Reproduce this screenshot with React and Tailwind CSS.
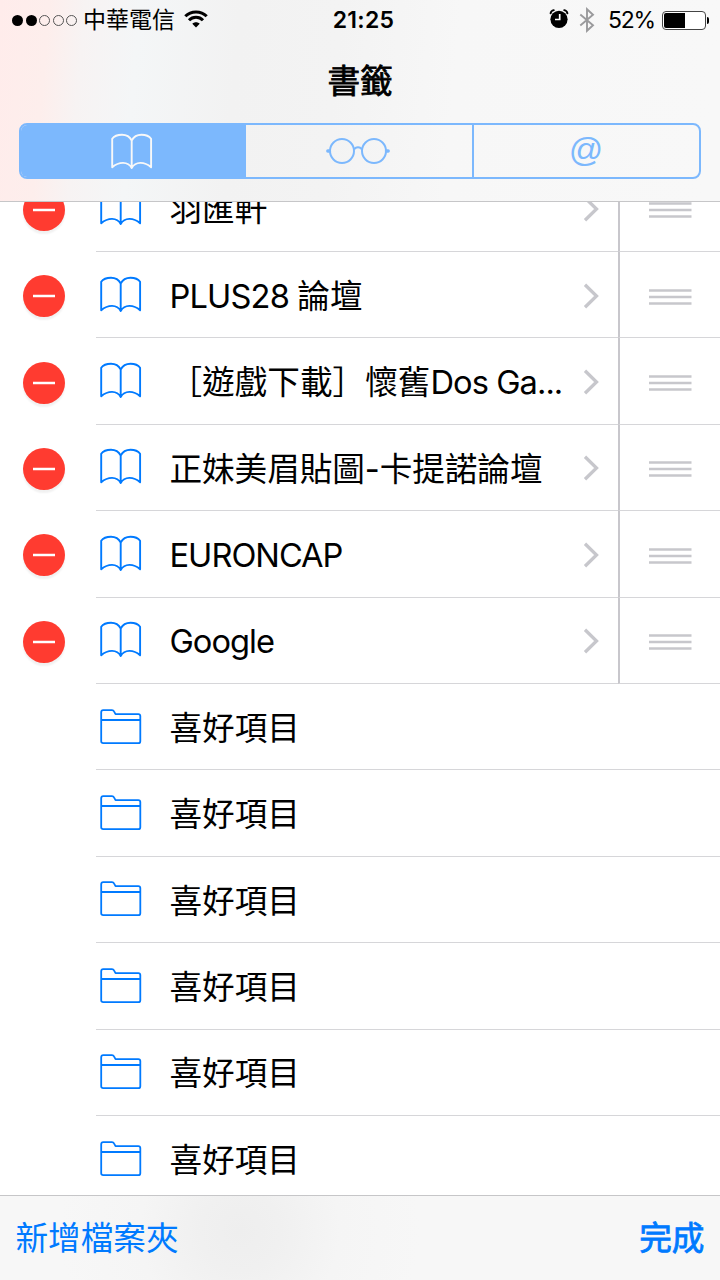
import React from "react";

const FONT = "font-['Inter','Noto_Sans_CJK_TC',sans-serif]";

const bookmarks = [
  { title: "羽匯軒" },
  { title: "PLUS28 ", spacing: "tracking-[-0.85px]", tail: "論壇" },
  { lead: "［遊戲下載］懷舊", title: "Dos Ga...", spacing: "tracking-[-0.95px]" },
  { title: "正妹美眉貼圖-卡提諾論壇", spacing: "tracking-[-0.08px]" },
  { title: "EURONCAP", spacing: "tracking-[-1px]" },
  { title: "Google", spacing: "tracking-[-0.98px]" },
];

const folders = ["喜好項目", "喜好項目", "喜好項目", "喜好項目", "喜好項目", "喜好項目"];

function BookIcon({ className }) {
  return (
    <svg className={className} width="42" height="38" viewBox="0 0 42 38" fill="none" stroke="currentColor" strokeWidth="1.9" strokeLinejoin="round">
      <path d="M20.700 7.500C18.500 3.200 14.500 1.800 11 1.800C6.500 1.800 3 3.300 1.200 5.800V34.300C8 28.500 17 28.200 20.700 35C24.500 28.200 33.500 28.500 40.100 34.300V5.800C38.300 3.300 34.800 1.800 30.500 1.800C27 1.800 23 3.200 20.700 7.500V35" />
    </svg>
  );
}

function FolderIcon() {
  return (
    <svg className="text-[#007aff]" width="42" height="36" viewBox="0 0 42 36" fill="none" stroke="currentColor" strokeWidth="1.8" strokeLinejoin="round">
      <path d="M1.200 3.200Q1.200 1.200 3.200 1.200H12Q13.400 1.200 14 2.400L15.500 5.100H38.300Q40.300 5.100 40.300 7.100V32.200Q40.300 34.200 38.300 34.200H3.200Q1.200 34.200 1.200 32.200ZM1.200 11H40.300" />
    </svg>
  );
}

function GlassesIcon() {
  return (
    <svg className="translate-x-[-1px]" width="66" height="28" viewBox="0 0 66 28" fill="none" stroke="currentColor" strokeWidth="2">
      <circle cx="17" cy="14" r="12" />
      <circle cx="49" cy="14" r="12" />
      <path d="M29 12.500C30.500 9.400 35.500 9.400 37 12.500" />
      <path d="M2.800 14H4.500M61.500 14H63.200" strokeWidth="3.400" strokeLinecap="round" />
    </svg>
  );
}

function WifiIcon() {
  return (
    <svg width="24" height="18" viewBox="0 0 24 18" fill="none" stroke="#000" strokeWidth="3">
      <path d="M1.300 6.300C7 .5 17 .5 22.700 6.300" />
      <path d="M5 10.300C8.800 6.300 15.200 6.300 19 10.300" />
      <path d="M12 17.400L8.300 13.700C10.200 11.700 13.800 11.700 15.700 13.700Z" fill="#000" stroke="none" />
    </svg>
  );
}

function AlarmIcon() {
  return (
    <svg width="20" height="20" viewBox="0 0 20 20" fill="none">
      <circle cx="10" cy="10.300" r="8.600" fill="#000" />
      <path d="M1.600 4.400Q1.900 1.900 4.800 1.200M18.400 4.400Q18.100 1.900 15.200 1.200" stroke="#000" strokeWidth="1.900" strokeLinecap="round" />
      <path d="M10.700 5V10.500H6" stroke="#fff" strokeWidth="1.700" />
    </svg>
  );
}

function BluetoothIcon() {
  return (
    <svg width="16" height="26" viewBox="0 0 16 26" fill="none" stroke="#9a9a9c" strokeWidth="1.900">
      <path d="M1.300 7.500L14 18.200L8 23.800V2.200L14 7.800L1.300 18.500" />
    </svg>
  );
}

function StatusBar() {
  return (
    <div className="grid h-10 grid-cols-[1fr_auto_1fr] items-center pl-3 pr-[11px] text-[23px] leading-none">
      <div className="flex items-center">
        <div className="flex gap-[2.500px]">
          <i className="size-[11px] rounded-full bg-black" />
          <i className="size-[11px] rounded-full bg-black" />
          <i className="size-[11px] rounded-full border border-[#555]" />
          <i className="size-[11px] rounded-full border border-[#555]" />
          <i className="size-[11px] rounded-full border border-[#555]" />
        </div>
        <span className="ml-[6px]">中華電信</span>
        <span className="ml-[9px] mt-[-3px]"><WifiIcon /></span>
      </div>
      <span className="translate-x-[3px] font-semibold tracking-[0.25px]">21:25</span>
      <div className="flex items-center justify-end">
        <span className="mt-[-3px]"><AlarmIcon /></span>
        <span className="ml-[10px] mt-[-1px]"><BluetoothIcon /></span>
        <span className="ml-[13px] pt-[1px] tracking-[-1.2px]">52%</span>
        <div className="ml-[7px] flex h-[19px] w-[44px] rounded-[4px] border border-[#444] bg-white p-[1px]">
          <i className="w-[21px] rounded-l-[2px] bg-black" />
        </div>
        <i className="ml-[1px] h-[7px] w-[2px] rounded-r-full bg-black" />
      </div>
    </div>
  );
}

function Segments() {
  return (
    <div className="mx-[19px] mt-[1px] grid h-[55.500px] grid-cols-[225px_1fr_227px] overflow-hidden rounded-[8px] border-2 border-[#7cb8fd] text-[#7cb8fd]">
      <div className="flex items-center justify-center bg-[#7cb8fd] text-[#f8f8f8]">
        <BookIcon className="translate-x-[-2px] translate-y-[1px]" />
      </div>
      <div className="flex items-center justify-center"><GlassesIcon /></div>
      <div className="flex items-center justify-center border-l-2 border-[#7cb8fd] pb-[3px] pr-[1px] font-['Liberation_Sans',sans-serif] text-[34px] leading-none">@</div>
    </div>
  );
}

function GripIcon() {
  return (
    <svg className="mt-[4px]" width="43" height="18" viewBox="0 0 43 18" stroke="#c7c7cc" strokeWidth="2.500">
      <path d="M0 2.500H42.500M0 9H42.500M0 15.500H42.500" />
    </svg>
  );
}

function BookmarkRow({ lead, title, tail, spacing = "" }) {
  return (
    <li className="flex h-[86.4px] shrink-0 pl-[23px]">
      <div className="flex w-[73px] items-center">
        <span className="mt-[2px] flex size-[42px] items-center justify-center rounded-full bg-[#ff3b30] shadow-[0_3px_2px_rgba(0,0,0,0.06)]">
          <svg width="22" height="4" viewBox="0 0 22 4" stroke="#fff" strokeWidth="2.500">
            <path d="M0 2H22" />
          </svg>
        </span>
      </div>
      <div className="flex flex-1 items-center border-b border-[#d6d6d9] pl-1">
        <BookIcon className="text-[#007aff]" />
        <span className="ml-[27.500px] flex-1 whitespace-pre pt-[3px]">{lead}<span className={spacing}>{title}</span>{tail}</span>
        <svg className="mr-[19px] mt-[2px]" width="16" height="28" viewBox="0 0 16 28" fill="none" stroke="#c7c7cc" strokeWidth="3.300">
          <path d="M2 2.800L13.500 14L2 25.200" />
        </svg>
      </div>
      <div className="flex w-[102px] items-center border-b border-l-2 border-b-[#d6d6d9] border-l-[#c8c7cc] pl-[29px]">
        <GripIcon />
      </div>
    </li>
  );
}

function FolderRow({ title }) {
  return (
    <li className="flex h-[86.4px] shrink-0 pl-24">
      <div className="flex flex-1 items-center border-b border-[#d6d6d9] pl-1">
        <FolderIcon />
        <span className="ml-[27.500px] pt-[3px]">{title}</span>
      </div>
    </li>
  );
}

export default function App() {
  return (
    <div className={"flex h-[1280px] w-[720px] flex-col overflow-hidden bg-white text-[32.64px] leading-none text-black " + FONT}>
      <header className="h-[202px] shrink-0 border-b border-[#c6c6c8] bg-[linear-gradient(95deg,#ffeceb_0px,#fdeeec_50px,#f7f3f3_85px,#f4f6f7_140px,#f2f2f2_240px,#f3f3f3_340px,#f7f7f7_460px,#f8f8f8_720px)]">
        <StatusBar />
        <h1 className="flex h-[82px] items-center justify-center font-normal [-webkit-text-stroke:0.8px_#000]">書籤</h1>
        <Segments />
      </header>
      <main className="flex-1 overflow-hidden">
        <ul className="mt-[-36.400px] flex flex-col">
          {bookmarks.map((b) => <BookmarkRow key={b.title} {...b} />)}
          {folders.map((title, i) => <FolderRow key={i} title={title} />)}
        </ul>
      </main>
      <footer className="flex h-[85px] shrink-0 items-center justify-between border-t border-[#c6c6c8] bg-[radial-gradient(circle_at_240px_35px,#eeeeee_0px,#f0f0f0_40px,#f5f5f5_100px,#f7f7f7_180px)] pl-[15.500px] pr-[15.500px] text-[#007aff]">
        <span>新增檔案夾</span>
        <span className="[-webkit-text-stroke:0.8px_#007aff]">完成</span>
      </footer>
    </div>
  );
}
